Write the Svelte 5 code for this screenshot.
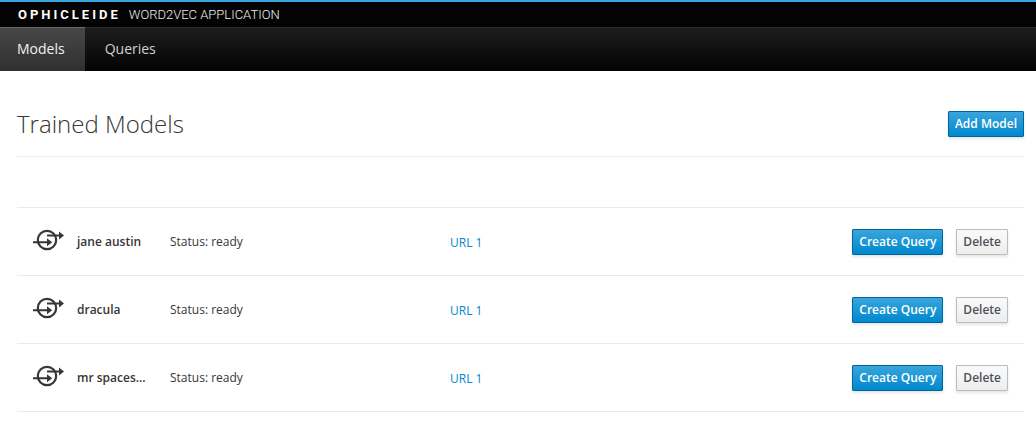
<script>
  const tabs = ['Models', 'Queries'];
  let active = $state('Models');
  const models = [
    { name: 'jane austin', status: 'ready', urls: ['URL 1'] },
    { name: 'dracula', status: 'ready', urls: ['URL 1'] },
    { name: 'mr spaces…', status: 'ready', urls: ['URL 1'] }
  ];
</script>

<header>
  <div class="brand">
    <strong>OPHICLEIDE</strong>
    <span>WORD2VEC APPLICATION</span>
  </div>
  <nav>
    {#each tabs as tab}
      <a href="#{tab.toLowerCase()}" class:active={tab === active} onclick={() => (active = tab)}>{tab}</a>
    {/each}
  </nav>
</header>

<main>
  <div class="title">
    <h1>Trained Models</h1>
    <button class="primary">Add Model</button>
  </div>
  <ul>
    {#each models as model}
      <li>
        <svg width="32" height="24" viewBox="0 0 32 24" fill="none" stroke="#363636" stroke-width="2" aria-hidden="true">
          <circle cx="14" cy="12" r="9.2" stroke-width="2.2" />
          <path d="M14 7.5H27M0 14.2H15" stroke-width="1.9" />
          <path d="M26 3.5L31 7.5L26 11.5ZM14 10.2L19.2 14.2L14 18.2Z" fill="#363636" stroke="none" />
        </svg>
        <strong class="name">{model.name}</strong>
        <span class="status">Status: {model.status}</span>
        <span class="urls">
          {#each model.urls as url}<a href="#url">{url}</a>{/each}
        </span>
        <span class="actions">
          <button class="primary">Create Query</button>
          <button>Delete</button>
        </span>
      </li>
    {/each}
  </ul>
</main>

<style>
  :global(body) {
    margin: 0;
    background: #fff;
    color: #363636;
    font: 12px/20px "Open Sans", sans-serif;
  }
  header {
    border-top: 2px solid #39a5dc;
    background: #030303;
  }
  .brand {
    display: flex;
    align-items: center;
    gap: 8px;
    height: 25px;
    padding-left: 18px;
    color: #fff;
    font-family: Roboto, sans-serif;
    font-size: 13px;
  }
  .brand strong {
    font-weight: 700;
    letter-spacing: 3px;
  }
  .brand span {
    color: #eee;
    font-weight: 300;
  }
  nav {
    display: flex;
    box-sizing: border-box;
    height: 44px;
    border-top: 1px solid #2b2b2b;
    background: linear-gradient(#1d1d1d, #030303);
  }
  nav a {
    margin-top: -1px;
    padding: 11px 20px;
    border-top: 1px solid transparent;
    color: #d1d1d1;
    font-size: 14px;
    text-decoration: none;
  }
  nav a:first-child {
    padding-left: 17px;
  }
  nav a.active {
    border-top-color: #696969;
    background: linear-gradient(#474747, #303030);
    color: #f1f1f1;
  }
  main {
    padding: 40px 12px 20px 17px;
  }
  .title {
    display: flex;
    align-items: center;
    justify-content: space-between;
    padding-bottom: 19px;
    border-bottom: 1px solid #ededed;
  }
  h1 {
    margin: 0;
    font-size: 24px;
    font-weight: 300;
    line-height: 26px;
  }
  ul {
    margin: 50px 0 0;
    padding: 0;
    border-top: 1px solid #e9e9e9;
    list-style: none;
  }
  li {
    display: flex;
    align-items: center;
    padding: 0 16px;
    height: 67px;
    border-bottom: 1px solid #e9e9e9;
  }
  svg {
    margin: 0 12px 4px 0;
  }
  .name {
    width: 93px;
    font-weight: 600;
  }
  .status {
    width: 280px;
  }
  .urls {
    padding-top: 2px;
  }
  .urls a {
    color: #0088ce;
    text-decoration: none;
  }
  .actions {
    display: flex;
    gap: 13px;
    margin-left: auto;
  }
  button {
    padding: 2px 6px;
    border: 1px solid #bbb;
    border-radius: 1px;
    background: linear-gradient(#fafafa, #ededed);
    box-shadow: 0 2px 3px rgba(3, 3, 3, 0.1);
    color: #4d5258;
    font: 600 12px/20px "Open Sans", sans-serif;
    cursor: pointer;
  }
  button.primary {
    border-color: #00659c;
    background: linear-gradient(#39a5dc, #0088ce);
    color: #fff;
  }
</style>
